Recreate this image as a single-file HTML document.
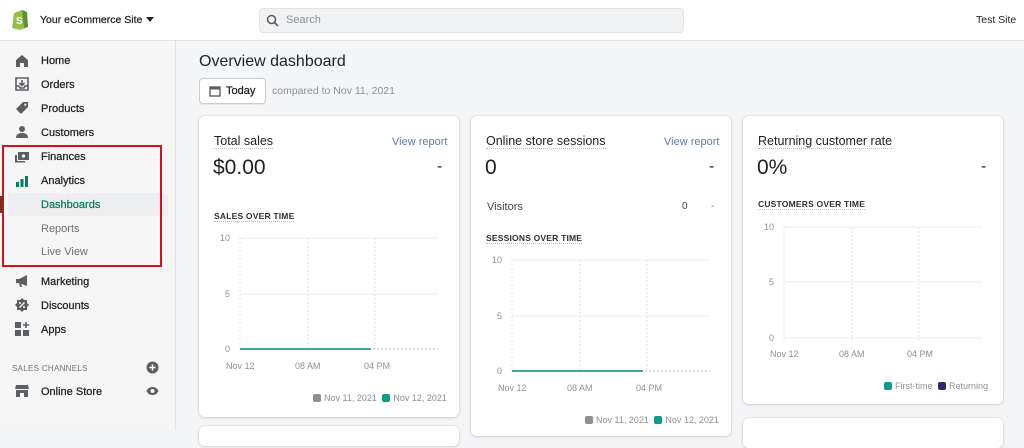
<!DOCTYPE html>
<html><head><meta charset="utf-8"><style>
*{margin:0;padding:0;box-sizing:border-box}
body{width:1024px;height:430px;overflow:hidden;background:#f4f5f7;font-family:"Liberation Sans",sans-serif;color:#202223;position:relative}
.a{position:absolute}
.top{left:0;top:0;width:1024px;height:41px;background:#fff;border-bottom:1px solid #e1e3e5}
.side{left:0;top:41px;width:176px;height:389px;background:#f6f6f7;border-right:1px solid #e1e3e5}
.nav{position:absolute;left:41px;font-size:11px;color:#202223;-webkit-text-stroke:0.25px #202223}
.sub{position:absolute;left:41px;font-size:11px;color:#6d7175}
.ic{position:absolute;left:15px;width:14px;height:14px}
.card{position:absolute;background:#fff;border-radius:6px;box-shadow:0 0 0 1px rgba(63,63,68,.05),0 1px 3px rgba(63,63,68,.15)}
.t{position:absolute;font-size:12.5px;border-bottom:1px dotted #bbb}
.big{position:absolute;font-size:21px}
.vr{position:absolute;font-size:11px;color:#607d9b}
.cap{position:absolute;font-size:8.5px;font-weight:bold;letter-spacing:.2px;border-bottom:1px dotted #bbb;color:#303030}
.lab{position:absolute;font-size:9px;color:#8c9196}
.sq{display:inline-block;width:8px;height:8px;border-radius:2px;vertical-align:-1px;margin-right:3px}
</style></head><body>
<div class="a top"></div>
<svg class="a" style="left:11px;top:9px" width="18" height="21" viewBox="0 0 18 21"><path d="M3 4l8-3 5 2 1 15-8 3-8-2z" fill="#95bf47"/><path d="M11 1l5 2 1 15-4 1z" fill="#5e8e3e"/><text x="5" y="15" font-size="10" font-weight="bold" fill="#fff" font-family="Liberation Sans">S</text></svg>
<div class="a" style="left:40px;top:14px;font-size:10.5px;-webkit-text-stroke:0.25px #202223">Your eCommerce Site</div>
<div class="a" style="left:146px;top:17px;width:0;height:0;border-left:4px solid transparent;border-right:4px solid transparent;border-top:5px solid #202223"></div>
<div class="a" style="left:259px;top:8px;width:425px;height:25px;background:#f1f2f3;border:1px solid #e1e3e5;border-radius:4px"></div>
<svg class="a" style="left:266px;top:14px" width="13" height="13" viewBox="0 0 13 13"><circle cx="5.5" cy="5.5" r="4" stroke="#5c5f62" stroke-width="1.6" fill="none"/><path d="M8.5 8.5l3.5 3.5" stroke="#5c5f62" stroke-width="1.8"/></svg>
<div class="a" style="left:286px;top:14px;font-size:11px;color:#8c9196">Search</div>
<div class="a" style="left:976px;top:14px;font-size:10.5px">Test Site</div>

<div class="a side"></div>
<svg class="ic" style="top:54px" viewBox="0 0 14 14"><path d="M7 1L1 6v7h4V9h4v4h4V6z" fill="#5c5f62"/></svg>
<div class="nav" style="top:55px">Home</div>
<svg class="ic" style="top:77px" viewBox="0 0 14 14"><path d="M1 1h12v12H1z" fill="none" stroke="#5c5f62" stroke-width="1.6"/><path d="M7 3v5M4.5 6L7 8.5 9.5 6M1 9h3l1 2h4l1-2h3" stroke="#5c5f62" stroke-width="1.6" fill="none"/></svg>
<div class="nav" style="top:79px">Orders</div>
<svg class="ic" style="top:101px" viewBox="0 0 14 14"><path d="M8 1h5v5l-7 7-5-5z" fill="#5c5f62"/><circle cx="10.3" cy="3.7" r="1.1" fill="#f6f6f7"/></svg>
<div class="nav" style="top:103px">Products</div>
<svg class="ic" style="top:125px" viewBox="0 0 14 14"><circle cx="7" cy="4" r="3" fill="#5c5f62"/><path d="M1 13c0-4 3-5 6-5s6 1 6 5z" fill="#5c5f62"/></svg>
<div class="nav" style="top:127px">Customers</div>
<svg class="ic" style="top:150px" viewBox="0 0 14 14"><rect x="3" y="2" width="11" height="8" fill="#5c5f62"/><rect x="0" y="5" width="2" height="7" fill="#5c5f62"/><rect x="0" y="11" width="10" height="1.5" fill="#5c5f62"/><circle cx="8.5" cy="6" r="1.6" fill="#f6f6f7"/></svg>
<div class="nav" style="top:151px">Finances</div>
<svg class="ic" style="top:174px" viewBox="0 0 14 14"><rect x="1" y="8" width="3" height="5" fill="#008060"/><rect x="5.5" y="5" width="3" height="8" fill="#008060"/><rect x="10" y="2" width="3" height="11" fill="#008060"/></svg>
<div class="nav" style="top:175px">Analytics</div>
<div class="a" style="left:8px;top:193px;width:160px;height:23px;background:#edeeef;border-radius:3px"></div>
<div class="nav" style="top:199px;color:#007f5f;-webkit-text-stroke:0.25px #007f5f">Dashboards</div>
<div class="sub" style="top:223px">Reports</div>
<div class="sub" style="top:246px">Live View</div>
<div class="a" style="left:2px;top:145px;width:160px;height:122px;border:2px solid #d0131a"></div>
<div class="a" style="left:0;top:196px;width:3px;height:17px;background:#8a2a1a"></div>
<svg class="ic" style="top:274px" viewBox="0 0 14 14"><path d="M1 5h3l8-4v11L4 9H1z" fill="#5c5f62"/><path d="M4 9l1 4h2L6 9" fill="#5c5f62"/></svg>
<div class="nav" style="top:276px">Marketing</div>
<svg class="ic" style="top:298px" viewBox="0 0 14 14"><path d="M7 0l2 2h3v3l2 2-2 2v3H9l-2 2-2-2H2V9L0 7l2-2V2h3z" fill="#5c5f62"/><path d="M4.5 9.5l5-5" stroke="#f6f6f7" stroke-width="1.4"/><circle cx="5" cy="5" r="1" fill="#f6f6f7"/><circle cx="9" cy="9" r="1" fill="#f6f6f7"/></svg>
<div class="nav" style="top:300px">Discounts</div>
<svg class="ic" style="top:322px" viewBox="0 0 14 14"><rect x="0" y="0" width="6" height="6" fill="#5c5f62"/><rect x="0" y="8" width="6" height="6" fill="#5c5f62"/><rect x="8" y="8" width="6" height="6" fill="#5c5f62"/><path d="M11 0v6M8 3h6" stroke="#5c5f62" stroke-width="1.6"/></svg>
<div class="nav" style="top:324px">Apps</div>
<div class="a" style="left:12px;top:364px;font-size:8px;color:#6d7175;letter-spacing:.3px">SALES CHANNELS</div>
<svg class="a" style="left:146px;top:361px" width="13" height="13" viewBox="0 0 13 13"><circle cx="6.5" cy="6.5" r="6" fill="#5c5f62"/><path d="M6.5 3.5v6M3.5 6.5h6" stroke="#fff" stroke-width="1.5"/></svg>
<svg class="ic" style="top:384px" viewBox="0 0 14 14"><path d="M1 1h12l1 4H0z M1 6h12v7H9V9H5v4H1z" fill="#5c5f62"/></svg>
<div class="nav" style="top:386px">Online Store</div>
<svg class="a" style="left:146px;top:386px" width="13" height="10" viewBox="0 0 13 10"><path d="M0.5 5C2 2 4 1 6.5 1S11 2 12.5 5C11 8 9 9 6.5 9S2 8 .5 5z" fill="#5c5f62"/><circle cx="6.5" cy="5" r="2" fill="#f6f6f7"/></svg>

<div class="a" style="left:199px;top:53px;font-size:16px">Overview dashboard</div>
<div class="a" style="left:199px;top:78px;width:67px;height:26px;background:#fff;border:1px solid #c9cccf;border-radius:4px;box-shadow:0 1px 0 rgba(0,0,0,.05)"></div>
<svg class="a" style="left:209px;top:85px" width="12" height="12" viewBox="0 0 12 12"><rect x="1" y="2" width="10" height="9" fill="none" stroke="#5c5f62" stroke-width="1.4"/><rect x="1" y="2" width="10" height="2.5" fill="#5c5f62"/></svg>
<div class="a" style="left:226px;top:85px;font-size:11px;-webkit-text-stroke:0.25px #202223">Today</div>
<div class="a" style="left:272px;top:85px;font-size:10.5px;color:#8c9196">compared to Nov 11, 2021</div>

<div class="card" style="left:199px;top:116px;width:260px;height:301px"></div>
<div class="t" style="left:214px;top:134px">Total sales</div>
<div class="vr" style="left:392px;top:136px">View report</div>
<div class="big" style="left:213px;top:156px">$0.00</div>
<div class="a" style="left:437px;top:158px;font-size:16px">-</div>
<div class="cap" style="left:214px;top:211px">SALES OVER TIME</div>
<svg class="a" style="left:199px;top:230px" width="260" height="190">
<g stroke="#ececec" stroke-width="1"><line x1="41" y1="8" x2="239" y2="8"/><line x1="41" y1="64" x2="239" y2="64"/></g>
<g stroke="#e3e3e3" stroke-dasharray="2,2"><line x1="41" y1="8" x2="41" y2="119"/><line x1="109" y1="8" x2="109" y2="119"/><line x1="176" y1="8" x2="176" y2="119"/><line x1="174" y1="119" x2="239" y2="119" stroke="#bbb"/></g>
<line x1="41" y1="119" x2="172" y2="119" stroke="#47a39a" stroke-width="2"/>
</svg>
<div class="lab" style="left:220px;top:233px">10</div><div class="lab" style="left:225px;top:289px">5</div><div class="lab" style="left:225px;top:344px">0</div>
<div class="lab" style="left:226px;top:361px">Nov 12</div><div class="lab" style="left:295px;top:361px">08 AM</div><div class="lab" style="left:364px;top:361px">04 PM</div>
<div class="lab" style="left:313px;top:393px"><span class="sq" style="background:#8c9196"></span>Nov 11, 2021 <span class="sq" style="background:#0f9b8e;margin-left:3px"></span>Nov 12, 2021</div>
<div class="card" style="left:199px;top:426px;width:260px;height:20px"></div>

<div class="card" style="left:471px;top:116px;width:260px;height:320px"></div>
<div class="t" style="left:486px;top:134px">Online store sessions</div>
<div class="vr" style="left:664px;top:136px">View report</div>
<div class="big" style="left:485px;top:156px">0</div>
<div class="a" style="left:709px;top:158px;font-size:16px">-</div>
<div class="a" style="left:487px;top:201px;font-size:11px;color:#444">Visitors</div>
<div class="a" style="left:682px;top:201px;font-size:10px;color:#444">0</div>
<div class="a" style="left:711px;top:201px;font-size:10px;color:#888">-</div>
<div class="cap" style="left:486px;top:233px">SESSIONS OVER TIME</div>
<svg class="a" style="left:471px;top:252px" width="260" height="130">
<g stroke="#ececec"><line x1="41" y1="8" x2="239" y2="8"/><line x1="41" y1="64" x2="239" y2="64"/></g>
<g stroke="#e3e3e3" stroke-dasharray="2,2"><line x1="41" y1="8" x2="41" y2="119"/><line x1="109" y1="8" x2="109" y2="119"/><line x1="176" y1="8" x2="176" y2="119"/><line x1="174" y1="119" x2="239" y2="119" stroke="#bbb"/></g>
<line x1="41" y1="119" x2="172" y2="119" stroke="#47a39a" stroke-width="2"/>
</svg>
<div class="lab" style="left:492px;top:255px">10</div><div class="lab" style="left:497px;top:311px">5</div><div class="lab" style="left:497px;top:366px">0</div>
<div class="lab" style="left:498px;top:383px">Nov 12</div><div class="lab" style="left:567px;top:383px">08 AM</div><div class="lab" style="left:636px;top:383px">04 PM</div>
<div class="lab" style="left:585px;top:415px"><span class="sq" style="background:#8c9196"></span>Nov 11, 2021 <span class="sq" style="background:#0f9b8e;margin-left:3px"></span>Nov 12, 2021</div>

<div class="card" style="left:743px;top:116px;width:260px;height:288px"></div>
<div class="t" style="left:758px;top:134px">Returning customer rate</div>
<div class="big" style="left:757px;top:156px">0%</div>
<div class="a" style="left:981px;top:158px;font-size:16px">-</div>
<div class="cap" style="left:758px;top:199px">CUSTOMERS OVER TIME</div>
<svg class="a" style="left:743px;top:219px" width="260" height="130">
<g stroke="#ececec"><line x1="41" y1="8" x2="239" y2="8"/><line x1="41" y1="63" x2="239" y2="63"/><line x1="41" y1="119" x2="239" y2="119"/></g>
<g stroke="#e3e3e3" stroke-dasharray="2,2"><line x1="41" y1="8" x2="41" y2="124"/><line x1="109" y1="8" x2="109" y2="124"/><line x1="176" y1="8" x2="176" y2="124"/></g>
</svg>
<div class="lab" style="left:764px;top:222px">10</div><div class="lab" style="left:769px;top:277px">5</div><div class="lab" style="left:769px;top:333px">0</div>
<div class="lab" style="left:770px;top:349px">Nov 12</div><div class="lab" style="left:839px;top:349px">08 AM</div><div class="lab" style="left:907px;top:349px">04 PM</div>
<div class="lab" style="left:884px;top:381px"><span class="sq" style="background:#0f9b8e"></span>First-time <span class="sq" style="background:#2e2a6e;margin-left:3px"></span>Returning</div>
<div class="card" style="left:743px;top:418px;width:260px;height:30px"></div>
</body></html>
